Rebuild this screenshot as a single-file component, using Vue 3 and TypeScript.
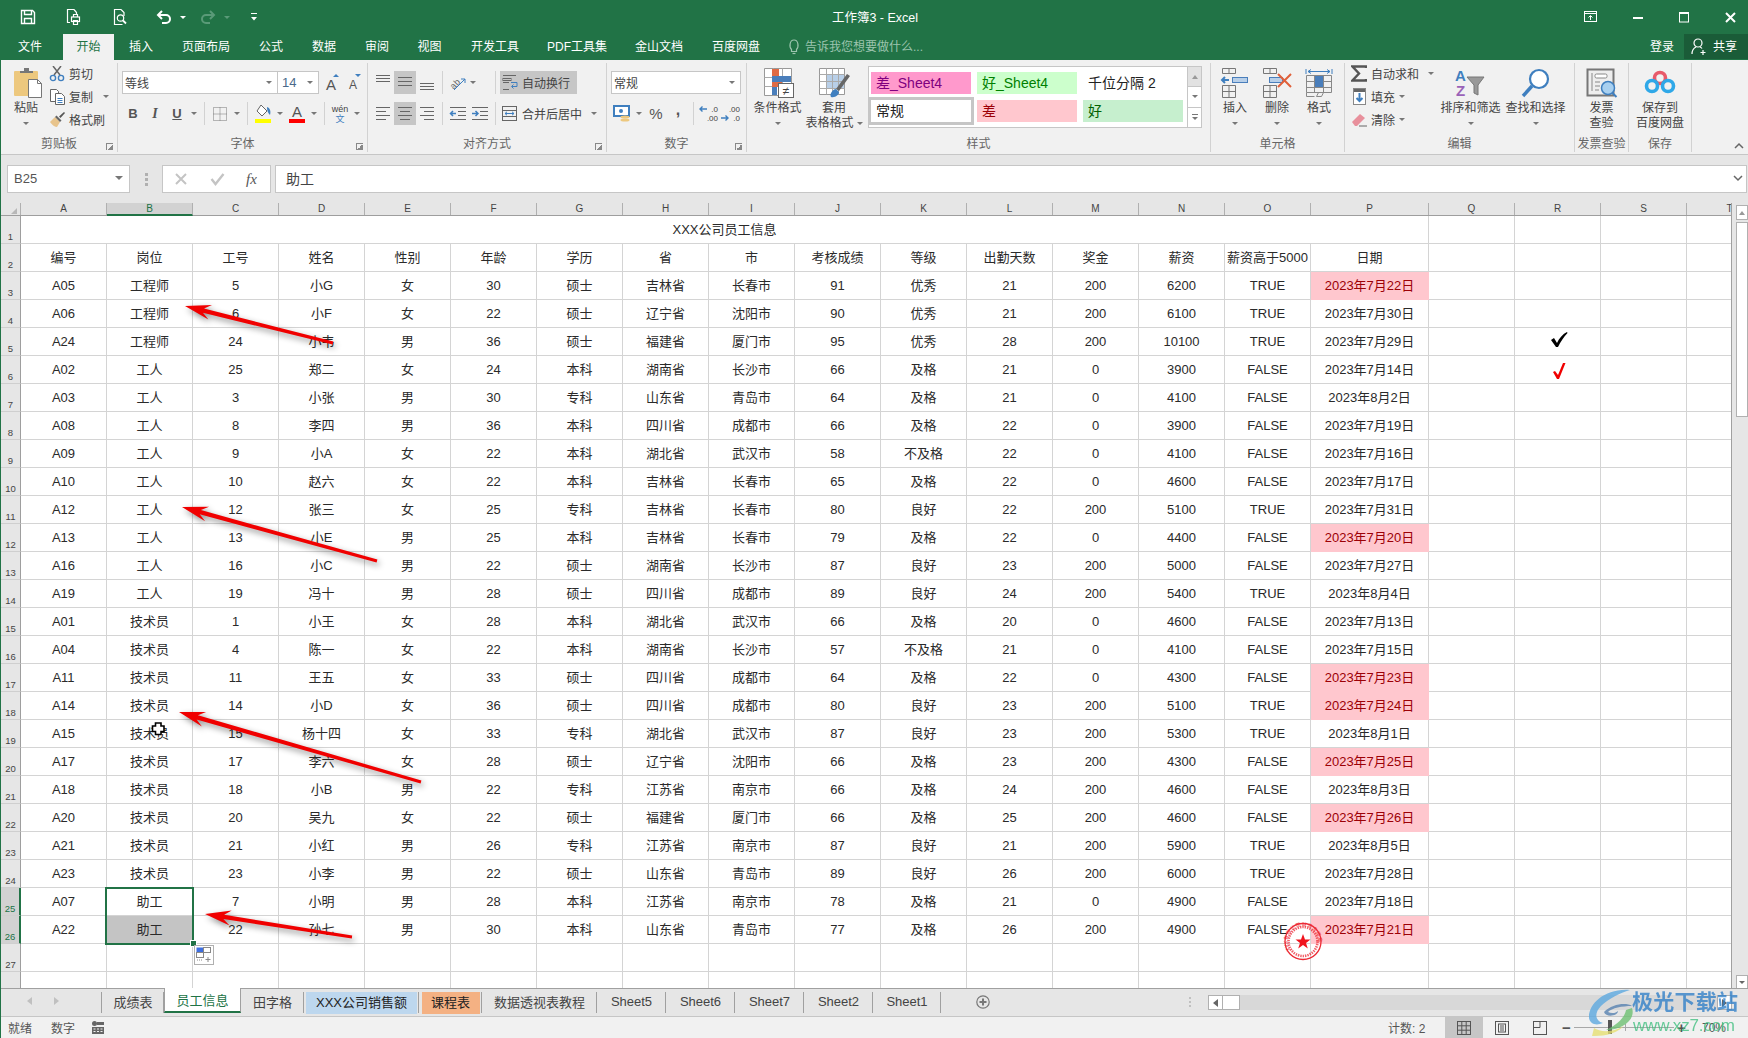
<script setup lang="ts">
interface Cell { text: string, width: number, kind?: string }

const mainTabs = [
  { name: '文件', width: 63 },
  { name: '开始', width: 51, active: true },
  { name: '插入', width: 54 },
  { name: '页面布局', width: 76 },
  { name: '公式', width: 54 },
  { name: '数据', width: 52 },
  { name: '审阅', width: 54 },
  { name: '视图', width: 51 },
  { name: '开发工具', width: 80 },
  { name: 'PDF工具集', width: 84 },
  { name: '金山文档', width: 80 },
  { name: '百度网盘', width: 74 },
]

const sheetTabs = [
  { name: '成绩表', width: 62 },
  { name: '员工信息', width: 77, kind: 'active' },
  { name: '田字格', width: 63 },
  { name: 'XXX公司销售额', width: 115, kind: 'blue' },
  { name: '课程表', width: 63, kind: 'orange' },
  { name: '数据透视表教程', width: 115 },
  { name: 'Sheet5', width: 69 },
  { name: 'Sheet6', width: 69 },
  { name: 'Sheet7', width: 69 },
  { name: 'Sheet2', width: 69 },
  { name: 'Sheet1', width: 68 },
]

const letters = 'ABCDEFGHIJKLMNOPQRST'.split('')
const colWidth = (i: number) => (i === 15 ? 118 : 86)

const data = [
  '编号 岗位 工号 姓名 性别 年龄 学历 省 市 考核成绩 等级 出勤天数 奖金 薪资 薪资高于5000 日期',
  'A05 工程师 5 小G 女 30 硕士 吉林省 长春市 91 优秀 21 200 6200 TRUE 2023年7月22日',
  'A06 工程师 6 小F 女 22 硕士 辽宁省 沈阳市 90 优秀 21 200 6100 TRUE 2023年7月30日',
  'A24 工程师 24 小韦 男 36 硕士 福建省 厦门市 95 优秀 28 200 10100 TRUE 2023年7月29日',
  'A02 工人 25 郑二 女 24 本科 湖南省 长沙市 66 及格 21 0 3900 FALSE 2023年7月14日',
  'A03 工人 3 小张 男 30 专科 山东省 青岛市 64 及格 21 0 4100 FALSE 2023年8月2日',
  'A08 工人 8 李四 男 36 本科 四川省 成都市 66 及格 22 0 3900 FALSE 2023年7月19日',
  'A09 工人 9 小A 女 22 本科 湖北省 武汉市 58 不及格 22 0 4100 FALSE 2023年7月16日',
  'A10 工人 10 赵六 女 22 本科 吉林省 长春市 65 及格 22 0 4600 FALSE 2023年7月17日',
  'A12 工人 12 张三 女 25 专科 吉林省 长春市 80 良好 22 200 5100 TRUE 2023年7月31日',
  'A13 工人 13 小E 男 25 本科 吉林省 长春市 79 及格 22 0 4400 FALSE 2023年7月20日',
  'A16 工人 16 小C 男 22 硕士 湖南省 长沙市 87 良好 23 200 5000 FALSE 2023年7月27日',
  'A19 工人 19 冯十 男 28 硕士 四川省 成都市 89 良好 24 200 5400 TRUE 2023年8月4日',
  'A01 技术员 1 小王 女 28 本科 湖北省 武汉市 66 及格 20 0 4600 FALSE 2023年7月13日',
  'A04 技术员 4 陈一 女 22 本科 湖南省 长沙市 57 不及格 21 0 4100 FALSE 2023年7月15日',
  'A11 技术员 11 王五 女 33 硕士 四川省 成都市 64 及格 22 0 4300 FALSE 2023年7月23日',
  'A14 技术员 14 小D 女 36 硕士 四川省 成都市 80 良好 23 200 5100 TRUE 2023年7月24日',
  'A15 技术员 15 杨十四 女 33 专科 湖北省 武汉市 87 良好 23 200 5300 TRUE 2023年8月1日',
  'A17 技术员 17 李六 女 28 硕士 辽宁省 沈阳市 66 及格 23 200 4300 FALSE 2023年7月25日',
  'A18 技术员 18 小B 男 22 专科 江苏省 南京市 66 及格 24 200 4600 FALSE 2023年8月3日',
  'A20 技术员 20 吴九 女 22 硕士 福建省 厦门市 66 及格 25 200 4600 FALSE 2023年7月26日',
  'A21 技术员 21 小红 男 26 专科 江苏省 南京市 87 良好 21 200 5900 TRUE 2023年8月5日',
  'A23 技术员 23 小李 男 22 硕士 山东省 青岛市 89 良好 26 200 6000 TRUE 2023年7月28日',
  'A07 助工 7 小明 男 28 本科 江苏省 南京市 78 及格 21 0 4900 FALSE 2023年7月18日',
  'A22 助工 22 孙七 男 30 本科 山东省 青岛市 77 及格 26 200 4900 FALSE 2023年7月21日',
]

// dates caught by the conditional rule in the sheet
const pink = new Set(['22', '20', '23', '24', '25', '26', '21'])

function blanks(from: number): Cell[] {
  return letters.slice(from).map((_, i) => ({ text: '', width: colWidth(i + from) }))
}

const rows: Cell[][] = [
  [{ text: 'XXX公司员工信息', width: 1408 }, ...blanks(16)],
  ...data.map((line, r) => [
    ...line.split(' ').map((text, i) => {
      const m = text.match(/^2023年7月(\d+)日$/)
      let kind = ''
      if (m && pink.has(m[1])) kind = 'bad'
      if (r === 24 && i === 1) kind = 'fill'
      return { text, width: colWidth(i), kind }
    }),
    ...blanks(16),
  ]),
  blanks(0),
  blanks(0),
]

function arrowPoints(tail: number[], tip: number[]) {
  const dx = tip[0] - tail[0]
  const dy = tip[1] - tail[1]
  const len = Math.hypot(dx, dy)
  const ux = dx / len
  const uy = dy / len
  const at = (back: number, side: number) =>
    `${(tip[0] - ux * back - uy * side).toFixed(1)},${(tip[1] - uy * back + ux * side).toFixed(1)}`
  return [
    at(0, 0), at(26, 7.5), at(19, 2.2), at(len, 1.6),
    at(len, -1.6), at(19, -2.2), at(26, -7.5),
  ].join(' ')
}

const arrows = [
  arrowPoints([333, 343], [185, 306]),
  arrowPoints([377, 561], [182, 507]),
  arrowPoints([421, 782], [179, 712]),
  arrowPoints([352, 937], [205, 914]),
]
</script>

<template>
  <div class="app">
    <header class="titlebar">
      <div class="qat">
        <svg width="16" height="16" viewBox="0 0 16 16" fill="none" stroke="#fff" stroke-width="1.4"><path d="M1.5 1.5h11l2 2v11h-13z" /><path d="M4.5 1.5v4h7v-4M4.5 14.5v-5h7v5" /></svg>
        <svg width="16" height="18" viewBox="0 0 16 18" fill="none" stroke="#fff" stroke-width="1.2"><path d="M9 1.5H2.500v13H5M9 1.500l2.500 3V7" /><rect x="6.500" y="9" width="8" height="4.500" /><path d="M8.500 9V6.500h4V9M8.500 12.500h4v4h-4z" /></svg>
        <svg width="16" height="18" viewBox="0 0 16 18" fill="none" stroke="#fff" stroke-width="1.200"><path d="M9 1.500H2.500v15h8M9 1.500l3 3V8" /><circle cx="8.500" cy="10" r="3.200" /><path d="M11 12.500l3 3" stroke-width="1.800" /></svg>
        <svg width="16" height="16" viewBox="0 0 16 16" fill="none" stroke="#fff" stroke-width="2"><path d="M2 6h8a4 4 0 0 1 0 8H6" /><path d="M6 2L2 6l4 4" /></svg>
        <i class="caret white" />
        <svg class="redo" width="16" height="16" viewBox="0 0 16 16" fill="none" stroke="#5a9a78" stroke-width="2"><path d="M14 6H6a4 4 0 0 0 0 8h4" /><path d="M10 2l4 4-4 4" /></svg>
        <i class="caret dim" />
        <svg class="custom" width="8" height="8" viewBox="0 0 8 8" fill="#fff"><rect x="1" y="0" width="6" height="1" /><path d="M1 4h6L4 7.500z" /></svg>
      </div>
      <div class="doc-title">工作簿3 - Excel</div>
      <div class="win">
        <svg width="14" height="12" viewBox="0 0 14 12" fill="none" stroke="#fff"><rect x=".5" y=".5" width="12" height="10" /><path d="M.5 2.500h12M6.500 9V5M4.500 6.500l2-2 2 2" /></svg>
        <svg width="10" height="10" viewBox="0 0 10 10" fill="#fff"><rect x="0" y="5" width="10" height="2" /></svg>
        <svg width="11" height="11" viewBox="0 0 11 11" fill="none" stroke="#fff"><rect x=".5" y=".5" width="9" height="9.500" /><path d="M.5 1.500h9" /></svg>
        <svg width="11" height="11" viewBox="0 0 11 11" fill="none" stroke="#fff" stroke-width="2"><path d="M1 1l9 9M10 1l-9 9" /></svg>
      </div>
    </header>

    <nav class="tabs">
      <div
        v-for="t in mainTabs"
        :key="t.name"
        class="tab"
        :class="{ active: t.active }"
        :style="{ width: t.width + 'px' }"
      >
        {{ t.name }}
      </div>
      <div class="tell">
        <svg width="12" height="16" viewBox="0 0 12 16" fill="none" stroke="#9cc4ae" stroke-width="1.200"><path d="M3.500 10.500C1 8 1.500 1 6 1s5 7 2.500 9.500v2h-5z" /><path d="M4.500 14.500h3" /></svg>
        <span>告诉我您想要做什么...</span>
      </div>
      <div class="login">登录</div>
      <div class="share">
        <svg width="16" height="18" viewBox="0 0 16 18" fill="none" stroke="#fff" stroke-width="1.200"><circle cx="7" cy="5" r="4" /><path d="M1 16c0-4 2-6 4-7M9 9c1 .4 1.500 .8 2 1.500M12 12v5M9.500 14.500h5" /></svg>
        <span>共享</span>
      </div>
    </nav>

    <section class="ribbon">
      <!-- 剪贴板 -->
      <div class="group g-clip">
        <div class="body">
          <div class="big paste">
            <svg width="32" height="30" viewBox="0 0 32 30">
              <rect x="4" y="3" width="24" height="25" rx="1" fill="#edc87e" />
              <path d="M10 5V3h4V0h5v3h4v2z" fill="#777" />
              <path d="M18.500 11.500h9l4 4v14h-13z" fill="#fff" stroke="#777" />
              <path d="M27.500 11.500v4h4" fill="none" stroke="#777" />
            </svg>
            <div class="lbl">粘贴</div>
            <div class="lbl"><i class="caret" /></div>
          </div>
          <div class="smalls">
            <div class="small">
              <svg width="16" height="16" viewBox="0 0 16 16" fill="none"><path d="M5 9l7-9M11 9L4 0" stroke="#666" stroke-width="1.500" /><circle cx="4" cy="12" r="2.600" stroke="#3f7fbf" stroke-width="1.400" /><circle cx="12" cy="12" r="2.600" stroke="#3f7fbf" stroke-width="1.400" /></svg>
              <span>剪切</span>
            </div>
            <div class="small">
              <svg width="16" height="16" viewBox="0 0 16 16" fill="#fff" stroke="#666"><path d="M1.500 .5h6l2 2v10h-8z" /><path d="M6.500 4.500h6l3 3v8h-9z" /><path d="M8.500 9.500h5M8.500 11.500h5M8.500 13.500h5" stroke="#3f7fbf" fill="none" /></svg>
              <span>复制</span>
              <i class="caret copy-caret" />
            </div>
            <div class="small">
              <svg width="16" height="16" viewBox="0 0 16 16"><path d="M1 10l5-5 5 5-3 5c-2 0-5-2-7-5z" fill="#e8c48c" /><path d="M6 5l5 5 1.500-1.500-5-5z" fill="#666" /><path d="M10 4.500L15 0l1 1-4.500 5z" fill="#555" /></svg>
              <span>格式刷</span>
            </div>
          </div>
        </div>
        <div class="label">剪贴板<i class="launcher" /></div>
      </div>

      <!-- 字体 -->
      <div class="group g-font">
        <div class="body rows">
          <div class="line">
            <div class="select font-name"><span>等线</span><i class="caret" /></div>
            <div class="select font-size"><span>14</span><i class="caret" /></div>
            <div class="tb grow"><b class="a-big">A</b><i class="tri up" /></div>
            <div class="tb grow"><b class="a-small">A</b><i class="tri down" /></div>
          </div>
          <div class="line">
            <div class="tb glyph"><b>B</b></div>
            <div class="tb glyph"><b><em>I</em></b></div>
            <div class="tb glyph"><b class="under">U</b></div>
            <div class="dd"><i class="caret" /></div>
            <i class="vsep" />
            <div class="tb">
              <svg width="16" height="16" viewBox="0 0 16 16" fill="none" stroke="#777" stroke-dasharray="1 1"><rect x="1.500" y="1.500" width="13" height="13" /><path d="M8 1.500v13M1.500 8h13" /></svg>
            </div>
            <div class="dd"><i class="caret" /></div>
            <i class="vsep" />
            <div class="tb">
              <svg width="18" height="20" viewBox="0 0 18 20"><path d="M7 1l6 6-5 5-5-5z" fill="#fff" stroke="#666" /><path d="M13 3c3 1 4 4 3 8-2-2-3-4-3-8z" fill="#3f7fbf" /><rect x="1" y="15" width="16" height="4" fill="#ffff00" /></svg>
            </div>
            <div class="dd"><i class="caret" /></div>
            <div class="tb color-a"><b>A</b><i class="bar" /></div>
            <div class="dd"><i class="caret" /></div>
            <i class="vsep" />
            <div class="tb wen"><span>wén</span><span class="wen-zh">文</span></div>
            <div class="dd"><i class="caret" /></div>
          </div>
        </div>
        <div class="label">字体<i class="launcher" /></div>
      </div>

      <!-- 对齐方式 -->
      <div class="group g-align">
        <div class="body rows">
          <div class="line">
            <div class="tb"><svg width="22" height="23" class="lines"><path d="M4 4.500h14M4 7.500h14M4 10.500h14" /></svg></div>
            <div class="tb on"><svg width="22" height="23" class="lines"><path d="M4 6.500h14M4 10.500h14M4 14.500h14" /></svg></div>
            <div class="tb"><svg width="22" height="23" class="lines"><path d="M4 12.500h14M4 15.500h14M4 18.500h14" /></svg></div>
            <i class="vsep" />
            <div class="tb orient">
              <svg width="18" height="18" viewBox="0 0 18 18" fill="none" stroke="#666"><text x="1" y="13" font-size="9" fill="#666" stroke="none" font-family="Liberation Sans" transform="rotate(-45 6 10)">ab</text><path d="M5 16L16 5M16 5h-4M16 5v4" stroke="#3f7fbf" /></svg>
            </div>
            <div class="dd narrow"><i class="caret" /></div>
            <i class="vsep wide" />
            <div class="wrap on">
              <svg width="17" height="17" viewBox="0 0 17 17" fill="none" stroke="#666"><path d="M1 1.500h13M1 8.500h6M1 15.500h6" /><rect x="1" y="4.500" width="8" height="2" /><path d="M9 8.500h6v4h-5M11.500 10.500l-2 2 2 2" stroke="#3f7fbf" /></svg>
              <span>自动换行</span>
            </div>
          </div>
          <div class="line">
            <div class="tb"><svg width="22" height="23" class="lines"><path d="M4 5.500h14M4 9.500h10M4 13.500h14M4 17.500h10" /></svg></div>
            <div class="tb on"><svg width="22" height="23" class="lines"><path d="M4 5.500h14M6 9.500h10M4 13.500h14M6 17.500h10" /></svg></div>
            <div class="tb"><svg width="22" height="23" class="lines"><path d="M4 5.500h14M8 9.500h10M4 13.500h14M8 17.500h10" /></svg></div>
            <i class="vsep" />
            <div class="tb"><svg width="18" height="16" viewBox="0 0 18 16" fill="none" stroke="#666"><path d="M1 1.500h16M9 5.500h8M9 9.500h8M1 13.500h16" /><path d="M7 7.500H1.500M4 5L1.500 7.500 4 10" stroke="#3f7fbf" stroke-width="1.500" /></svg></div>
            <div class="tb"><svg width="18" height="16" viewBox="0 0 18 16" fill="none" stroke="#666"><path d="M1 1.500h16M9 5.500h8M9 9.500h8M1 13.500h16" /><path d="M1 7.500h6M4.500 5L7 7.500 4.500 10" stroke="#3f7fbf" stroke-width="1.500" /></svg></div>
            <i class="vsep" />
            <div class="wrap merge">
              <svg width="16" height="17" viewBox="0 0 16 17" fill="none" stroke="#666"><rect x=".5" y="1.500" width="14" height="14" /><path d="M.5 5.500h14M.5 11.500h14" /><path d="M3 8.500h9M5 6.800L3 8.500l2 1.700M10 6.800l2 1.700-2 1.700" stroke="#3f7fbf" /></svg>
              <span>合并后居中</span>
              <i class="caret merge-caret" />
            </div>
          </div>
        </div>
        <div class="label">对齐方式<i class="launcher" /></div>
      </div>

      <!-- 数字 -->
      <div class="group g-num">
        <div class="body rows">
          <div class="line">
            <div class="select num-format"><span>常规</span><i class="caret" /></div>
          </div>
          <div class="line">
            <div class="tb">
              <svg width="18" height="18" viewBox="0 0 18 18"><rect x="1" y="1" width="15" height="10" fill="#fff" stroke="#3f7fbf" stroke-width="2" /><circle cx="8" cy="6" r="2" fill="#3f7fbf" /><ellipse cx="12" cy="12" rx="4.500" ry="1.500" fill="#edc87e" /><ellipse cx="12" cy="15" rx="4.500" ry="1.500" fill="#edc87e" /></svg>
            </div>
            <div class="dd thin"><i class="caret" /></div>
            <div class="tb pct">%</div>
            <div class="tb comma">,</div>
            <i class="vsep" />
            <div class="tb dec"><span>.0</span><span>.00</span><svg width="8" height="6" class="dec-a" viewBox="0 0 8 6" fill="none" stroke="#3f7fbf" stroke-width="1.400"><path d="M8 3H1M3.500 .5L1 3l2.500 2.500" /></svg></div>
            <div class="tb dec"><span>.00</span><span>.0</span><svg width="8" height="6" class="dec-b" viewBox="0 0 8 6" fill="none" stroke="#3f7fbf" stroke-width="1.400"><path d="M0 3h7M4.500 .5L7 3 4.500 5.500" /></svg></div>
          </div>
        </div>
        <div class="label">数字<i class="launcher" /></div>
      </div>

      <!-- 样式 -->
      <div class="group g-style">
        <div class="body">
          <div class="big cond">
            <svg width="32" height="30" viewBox="0 0 32 30">
              <path d="M2.500 .5h27v27h-27z" fill="#fff" stroke="#999" />
              <path d="M2.500 9.500h27M2.500 18.500h27M11.500 .5v27M20.500 .5v27" stroke="#aaa" fill="none" />
              <rect x="10" y="1" width="7" height="8" fill="#e06b45" />
              <rect x="10" y="8" width="19" height="6" fill="#4a7ebb" />
              <rect x="10" y="14" width="10" height="5" fill="#e06b45" />
              <rect x="10" y="19" width="5" height="8" fill="#4a7ebb" />
              <rect x="16.500" y="15.500" width="15" height="14" fill="#fff" stroke="#666" />
              <text x="24" y="26.500" text-anchor="middle" font-size="12" fill="#444" font-family="Liberation Sans">≠</text>
            </svg>
            <div class="lbl">条件格式</div>
            <div class="lbl"><i class="caret" /></div>
          </div>
          <div class="big table-fmt">
            <svg width="32" height="30" viewBox="0 0 32 30">
              <path d="M1.500 .5h25v26h-25z" fill="#fff" stroke="#999" />
              <rect x="8" y="6" width="18" height="14" fill="#b8cfe8" />
              <path d="M1.500 6.500h25M1.500 13.500h25M1.500 20.500h25M8.500 .5v26M14.500 .5v26M20.500 .5v26" stroke="#aaa" fill="none" />
              <path d="M18 21l11-15 3 2-11 15z" fill="#666" />
              <path d="M13 29c-2-3 2-8 5-8l3 3c0 3-4 6-8 5z" fill="#3f7fbf" />
            </svg>
            <div class="lbl">套用</div>
            <div class="lbl">表格格式<i class="caret inline" /></div>
          </div>
          <div class="gallery">
            <div class="st st-pink">差_Sheet4</div>
            <div class="st st-lime">好_Sheet4</div>
            <div class="st">千位分隔 2</div>
            <div class="st st-normal">常规</div>
            <div class="st st-bad">差</div>
            <div class="st st-good">好</div>
          </div>
          <div class="gallery-scroll">
            <div class="gs top"><i class="caret up-caret" /></div>
            <div class="gs"><i class="caret" /></div>
            <div class="gs more"><i class="dash" /><i class="caret" /></div>
          </div>
        </div>
        <div class="label">样式</div>
      </div>

      <!-- 单元格 -->
      <div class="group g-cells">
        <div class="body">
          <div class="big cell-tool">
            <svg width="32" height="30" viewBox="0 0 32 30" fill="none" stroke="#777">
              <path d="M3.500 .5h13v5h-13zM10 .5v5M3.500 17.500h13v12h-13zM10 17.500v12M3.500 23.500h13" />
              <rect x="13.500" y="9.500" width="15" height="5" fill="#b8cfe8" stroke="#4a7ebb" />
              <path d="M10 12H3M6 9l-3 3 3 3" stroke="#3f7fbf" stroke-width="2" />
            </svg>
            <div class="lbl">插入</div>
            <div class="lbl"><i class="caret" /></div>
          </div>
          <div class="big cell-tool">
            <svg width="32" height="30" viewBox="0 0 32 30" fill="none" stroke="#777">
              <path d="M2.500 .5h13v5h-13zM9 .5v5M2.500 17.500h13v12h-13zM9 17.500v12M2.500 23.500h13" />
              <rect x="8.500" y="9.500" width="13" height="5" fill="#b8cfe8" stroke="#4a7ebb" />
              <path d="M17 6l13 13M30 6L17 19" stroke="#e0603a" stroke-width="2" />
            </svg>
            <div class="lbl">删除</div>
            <div class="lbl"><i class="caret" /></div>
          </div>
          <div class="big cell-tool">
            <svg width="32" height="30" viewBox="0 0 32 30" fill="none" stroke="#888">
              <path d="M3 1v5M29 1v5M5 3.500h22M8 1.500L5 3.500l3 2M24 1.500l3 2-3 2" stroke="#3f7fbf" />
              <path d="M3.500 7.500h25v17h-25zM3.500 13.500h25M3.500 19.500h25M11.500 7.500v17M20.500 7.500v17" />
              <rect x="12" y="8" width="8" height="11" fill="#4a7ebb" stroke="none" />
              <path d="M3.500 24.500v4h8M20.500 24.500l-2 4h-5l2-4" />
            </svg>
            <div class="lbl">格式</div>
            <div class="lbl"><i class="caret" /></div>
          </div>
        </div>
        <div class="label">单元格</div>
      </div>

      <!-- 编辑 -->
      <div class="group g-edit">
        <div class="body">
          <div class="smalls edit-smalls">
            <div class="small">
              <svg width="16" height="17" viewBox="0 0 16 17" fill="none" stroke="#555" stroke-width="2.400"><path d="M15 3V1.500H1.500L8 8.500l-6.500 7H15V14" /></svg>
              <span>自动求和</span>
              <i class="caret sum-caret" />
            </div>
            <div class="small">
              <svg width="16" height="17" viewBox="0 0 16 17" fill="#fff" stroke="#888"><rect x="2.500" y=".5" width="12" height="16" /><rect x="3" y="1" width="11" height="3" fill="#666" stroke="none" /><path d="M8.500 5v8M5.500 10l3 3 3-3" fill="none" stroke="#3f7fbf" stroke-width="2" /></svg>
              <span>填充</span>
              <i class="caret tail-caret" />
            </div>
            <div class="small">
              <svg width="16" height="16" viewBox="0 0 16 16"><path d="M1 10l8-8 5 4-8 8H4z" fill="#e8909c" /><path d="M8 14h8" stroke="#666" /></svg>
              <span>清除</span>
              <i class="caret tail-caret" />
            </div>
          </div>
          <div class="big sort">
            <svg width="32" height="30" viewBox="0 0 32 30">
              <text x="0" y="13" font-size="15" font-weight="700" fill="#3f7fbf" font-family="Liberation Sans">A</text>
              <text x="1" y="28" font-size="15" font-weight="700" fill="#9a62b8" font-family="Liberation Sans">Z</text>
              <path d="M12 9h17l-6 8v10l-4-2v-8z" fill="#999" stroke="#777" />
            </svg>
            <div class="lbl">排序和筛选</div>
            <div class="lbl"><i class="caret" /></div>
          </div>
          <div class="big sort">
            <svg width="32" height="30" viewBox="0 0 32 30" fill="none" stroke="#3f7fbf">
              <circle cx="19" cy="11" r="9" stroke-width="2.200" fill="#fff" />
              <path d="M12 18L3 28" stroke-width="3.400" />
            </svg>
            <div class="lbl">查找和选择</div>
            <div class="lbl"><i class="caret" /></div>
          </div>
        </div>
        <div class="label">编辑</div>
      </div>

      <!-- 发票查验 -->
      <div class="group g-inv">
        <div class="body">
          <div class="big wide-tool">
            <svg width="32" height="30" viewBox="0 0 32 30">
              <rect x="1.500" y="1.500" width="26" height="26" fill="#eee" stroke="#777" stroke-width="2" />
              <rect x="9" y="6" width="12" height="4" rx="1.500" fill="#fff" stroke="#888" />
              <path d="M6 5v18M9 14h5M9 18h5M9 22h4" stroke="#888" />
              <circle cx="22" cy="20" r="6.500" fill="#a8d0f0" stroke="#3f7fbf" stroke-width="1.500" />
              <path d="M26.500 25l4 4" stroke="#3f7fbf" stroke-width="2" />
            </svg>
            <div class="lbl">发票</div>
            <div class="lbl">查验</div>
          </div>
        </div>
        <div class="label">发票查验</div>
      </div>

      <!-- 保存 -->
      <div class="group g-save">
        <div class="body">
          <div class="big wide-tool">
            <svg width="32" height="30" viewBox="0 0 32 30" fill="none" stroke-width="3.600">
              <circle cx="16" cy="10" r="5.500" stroke="#e85a6a" />
              <circle cx="8" cy="18" r="5.500" stroke="#2fa8e8" />
              <circle cx="24" cy="18" r="5.500" stroke="#2fa8e8" />
            </svg>
            <div class="lbl">保存到</div>
            <div class="lbl">百度网盘</div>
          </div>
        </div>
        <div class="label">保存</div>
      </div>

      <svg class="collapse" width="10" height="7" viewBox="0 0 10 7" fill="none" stroke="#666" stroke-width="1.500"><path d="M1 6l4-4 4 4" /></svg>
    </section>

    <section class="formula">
      <div class="name-box"><span>B25</span><i class="caret big-caret" /></div>
      <div class="dots"><i /><i /><i /></div>
      <div class="fx-box">
        <svg width="14" height="14" viewBox="0 0 14 14" fill="none" stroke="#c4c4c4" stroke-width="2"><path d="M2 2l10 10M12 2L2 12" /></svg>
        <svg width="15" height="14" viewBox="0 0 15 14" fill="none" stroke="#c4c4c4" stroke-width="2.400"><path d="M1.500 7l4 5 8-10" /></svg>
        <span class="fx">fx</span>
      </div>
      <div class="input">
        <span>助工</span>
        <svg width="10" height="7" viewBox="0 0 10 7" fill="none" stroke="#666" stroke-width="1.500"><path d="M1 1l4 4 4-4" /></svg>
      </div>
    </section>

    <section class="sheet">
      <div class="grid">
        <div class="col-head">
          <div class="corner"><i /></div>
          <div
            v-for="(c, i) in letters"
            :key="c"
            class="ch"
            :class="{ on: c === 'B' }"
            :style="{ width: colWidth(i) + 'px' }"
          >
            {{ c }}
          </div>
        </div>
        <div class="rows-wrap">
          <div v-for="(row, r) in rows" :key="r" class="row">
            <div class="rh" :class="{ on: r === 24 || r === 25 }">{{ r < 27 ? r + 1 : '' }}</div>
            <div
              v-for="(cell, c) in row"
              :key="c"
              class="cell"
              :class="cell.kind"
              :style="{ width: cell.width + 'px' }"
            >
              {{ cell.text }}
            </div>
          </div>
        </div>
        <div class="selection" />
        <div class="handle" />
        <div class="quick">
          <svg width="16" height="16" viewBox="0 0 16 16" fill="none" stroke="#888"><rect x="1" y="1" width="6" height="4.500" fill="#3f6fe0" stroke="#3f6fe0" /><rect x="7.500" y=".5" width="7" height="5" /><rect x=".5" y="5.500" width="7" height="5" /><path d="M1 13h6" stroke-dasharray="1 1" /><path d="M12 10v5M9.500 12.500h5" /></svg>
        </div>
      </div>
      <div class="vscroll">
        <div class="sb-btn"><i class="caret up-caret" /></div>
        <div class="sb-thumb" />
        <div class="sb-btn end"><i class="caret" /></div>
      </div>
    </section>

    <section class="sheet-tabs">
      <div class="nav-arrows">
        <i class="tri-l" />
        <i class="tri-r" />
      </div>
      <i class="tab-sep" />
      <div
        v-for="t in sheetTabs"
        :key="t.name"
        class="stab"
        :class="t.kind"
        :style="{ width: t.width + 'px' }"
      >
        <span>{{ t.name }}</span>
      </div>
      <svg class="add" width="14" height="14" viewBox="0 0 14 14" fill="none" stroke="#777"><circle cx="7" cy="7" r="6.200" stroke-width="1.200" /><path d="M7 3.500v7M3.500 7h7" stroke-width="2" /></svg>
      <div class="dots tab-dots"><i /><i /><i /></div>
      <div class="hscroll">
        <div class="hb"><i class="tri-l dark" /></div>
        <div class="hthumb" />
        <div class="htrack" />
        <div class="hb"><i class="tri-r dark" /></div>
      </div>
    </section>

    <footer class="status">
      <span class="ready">就绪</span>
      <span class="numlock">数字</span>
      <svg class="macro" width="12" height="13" viewBox="0 0 12 13" fill="#666"><circle cx="2.500" cy="2.500" r="2.500" /><rect x="5" y="1" width="7" height="3" /><path d="M0 6h12v7H0zM1.500 7.500v1h2v-1zM5 7.500v1h2v-1zM8.500 7.500v1h2v-1zM1.500 10v1h2v-1zM5 10v1h2v-1zM8.500 10v1h2v-1z" fill-rule="evenodd" /></svg>
      <div class="status-right">
        <span class="count">计数: 2</span>
        <div class="view on">
          <svg width="14" height="14" viewBox="0 0 14 14" fill="none" stroke="#555"><rect x=".5" y=".5" width="13" height="13" /><path d="M.5 4.800h13M.5 9.200h13M4.800 .5v13M9.200 .5v13" /></svg>
        </div>
        <div class="view">
          <svg width="14" height="14" viewBox="0 0 14 14" fill="none" stroke="#555"><rect x=".5" y=".5" width="13" height="13" /><rect x="3.500" y="3" width="7" height="8" /><path d="M5 5h4M5 7h4M5 9h4" /></svg>
        </div>
        <div class="view">
          <svg width="14" height="14" viewBox="0 0 14 14" fill="none" stroke="#555"><rect x=".5" y=".5" width="13" height="13" /><path d="M7 .5v6H.5" /></svg>
        </div>
        <span class="pm">−</span>
        <div class="slider"><i class="tick" /><i class="knob" /></div>
        <span class="pm">+</span>
        <span class="zoom">70%</span>
      </div>
    </footer>

    <!-- things floating over the sheet: pasted arrows, shapes, stamp, watermark -->
    <svg class="overlay" width="1748" height="1038" viewBox="0 0 1748 1038">
      <polygon v-for="(pts, i) in arrows" :key="i" class="arrow" :points="pts" />
      <path d="M155.500 723h5.500v3h3v5.500h-3v3h-5.500v-3h-3v-5.500h3z" fill="#fff" stroke="#000" stroke-width="1.600" />
      <path d="M1551 340l3-2 3 5c2-5 6-9 10-11l.5 1c-4 4-7 9-9.500 14h-2z" fill="#000" />
      <path d="M1553 372l2-1 3 4 5-12h2.500l-6.500 16h-2z" fill="#f00000" />
      <g class="stamp">
        <circle cx="1303" cy="941.500" r="18" fill="none" stroke="#ec2a34" stroke-width="1.300" />
        <circle cx="1303" cy="941.500" r="14.500" fill="none" stroke="#ec2a34" stroke-width="2.600" stroke-dasharray="1.400 1" stroke-opacity=".75" />
        <path id="stamp-ring" d="M1290 950a15.500 15.500 0 1 1 26 0" fill="none" />
        <text font-size="4.800" fill="#ec2a34" letter-spacing=".6" font-family="Noto Sans CJK SC, sans-serif"><textPath href="#stamp-ring">XXX有限公司财务专用章</textPath></text>
        <polygon points="1303,934 1305,939.500 1310.500,939.500 1306,943 1307.800,948.500 1303,945 1298.200,948.500 1300,943 1295.500,939.500 1301,939.500" fill="#f0141e" />
      </g>
      <g class="mark">
        <path d="M1630 990c-25-2-42 14-41 28 1 6 7 8 14 5-8-2-9-10-2-17 7-7 19-13 29-16z" fill="#5aa8e0" />
        <path d="M1604 1012c8-8 22-10 28-6-10 0-20 2-24 6 4 2 8 1 10-1 0 5-12 7-14 1z" fill="#5580b0" />
        <path d="M1632 1008c4 12-10 22-26 22 8-4 18-10 20-20z" fill="#6cc070" />
        <path d="M1594 1028c6 4 18 5 30-2-10 10-24 10-32 10z" fill="#e6e070" />
        <text x="1632" y="1009" font-size="21" font-weight="700" fill="#2f7fc8" textLength="106" font-family="Noto Sans CJK SC, sans-serif">极光下载站</text>
        <text x="1633" y="1031" font-size="17" fill="#3fbf7f" textLength="102" font-family="Liberation Sans, sans-serif">www.xz7.com</text>
      </g>
    </svg>
  </div>
</template>

<style scoped>
.app {
  position: relative;
  width: 1748px;
  height: 1038px;
  box-sizing: border-box;
  border-left: 1px solid #217346;
  overflow: hidden;
  background: #f1f1f1;
  color: #444;
  font: 12px "Liberation Sans", "Noto Sans CJK SC", sans-serif;
}
i { display: block; font-style: normal; }

/* small drop-down triangle used everywhere */
.caret {
  flex: none;
  width: 0;
  height: 0;
  border-left: 3px solid transparent;
  border-right: 3px solid transparent;
  border-top: 3px solid #777;
}
.caret.white { border-top-color: #fff; margin-left: 8px; }
.caret.dim { border-top-color: #5a9a78; margin-left: 8px; }
.caret.up-caret { border-top: 0; border-bottom: 4px solid #999; }

/* title bar */
.titlebar {
  position: relative;
  height: 34px;
  margin-left: -1px;
  background: #217346;
  display: flex;
  align-items: center;
  color: #fff;
}
.qat { display: flex; align-items: center; padding-left: 20px; gap: 0; }
.qat svg:nth-child(1) { margin-right: 29px; }
.qat svg:nth-child(2) { margin-right: 31px; }
.qat svg:nth-child(3) { margin-right: 28px; }
.qat .redo { margin-left: 14px; }
.qat .custom { margin-left: 20px; }
.doc-title {
  position: absolute;
  left: 0;
  right: 0;
  top: 10px;
  padding-left: 2px;
  text-align: center;
  font-size: 12.500px;
  line-height: 16px;
}
.win { margin-left: auto; display: flex; align-items: center; padding-right: 12px; }
.win svg:nth-child(1) { margin-right: 35px; }
.win svg:nth-child(2) { margin-right: 36px; }
.win svg:nth-child(3) { margin-right: 35px; }

/* tab strip */
.tabs {
  height: 26px;
  margin-left: -1px;
  background: #217346;
  display: flex;
  color: #fff;
  line-height: 26px;
}
.tab { text-align: center; flex: none; }
.tab:first-child { padding-right: 3px; box-sizing: border-box; }
.tab.active { background: #f1f1f1; color: #217346; }
.tell { display: flex; align-items: center; margin-left: 15px; color: #9cc4ae; gap: 5px; }
.login { margin-left: auto; margin-right: 10px; }
.share {
  width: 64px;
  box-sizing: border-box;
  height: 25px;
  background: #1a5c38;
  display: flex;
  align-items: center;
  padding-left: 7px;
  gap: 6px;
}

/* ribbon */
.ribbon {
  height: 95px;
  box-sizing: border-box;
  padding-top: 3px;
  display: flex;
  border-bottom: 1px solid #c6c6c6;
  background: #f1f1f1;
  position: relative;
}
.group {
  flex: none;
  height: 89px;
  box-sizing: border-box;
  border-right: 1px solid #d2d2d2;
  display: flex;
  flex-direction: column;
}
.g-clip { width: 117px; }
.g-font { width: 250px; }
.g-align { width: 239px; }
.g-num { width: 140px; }
.g-style { width: 464px; }
.g-cells { width: 134px; }
.g-edit { width: 230px; }
.g-inv { width: 54px; }
.g-save { width: 63px; }
.body { height: 74px; display: flex; box-sizing: border-box; }
.label {
  position: relative;
  height: 15px;
  line-height: 15px;
  text-align: center;
  color: #666;
  white-space: nowrap;
}
.launcher {
  position: absolute;
  right: 4px;
  bottom: 2px;
  width: 6px;
  height: 6px;
  border-left: 1px solid #888;
  border-top: 1px solid #888;
  background: linear-gradient(135deg, transparent 50%, #888 50%);
}
.big {
  flex: none;
  box-sizing: border-box;
  padding-top: 5px;
  display: flex;
  flex-direction: column;
  align-items: center;
}
.big svg { flex: none; height: 30px; margin-bottom: 3px; }
.lbl { height: 15px; line-height: 15px; display: flex; align-items: center; justify-content: center; white-space: nowrap; }
.caret.inline { margin-left: 3px; }
.paste { width: 32px; margin-left: 9px; margin-right: 7px; }
.smalls { display: flex; flex-direction: column; margin-top: -1px; }
.small { height: 23px; display: flex; align-items: center; white-space: nowrap; }
.small svg { flex: none; }
.small span { margin-left: 4px; }
.copy-caret { margin-left: 10px; }
.cond { width: 55px; margin-left: 3px; }
.table-fmt { width: 58px; }
.cell-tool { width: 42px; }
.cell-tool:first-child { margin-left: 3px; }
.edit-smalls { width: 87px; margin-left: 6px; }
.sum-caret { margin-left: 9px; }
.tail-caret { margin-left: 4px; }
.sort { width: 65px; }
.wide-tool { width: 100%; }

.rows { flex-direction: column; padding: 8px 0 0 4px; gap: 8px; }
.line { display: flex; align-items: center; height: 23px; }
.tb {
  position: relative;
  flex: none;
  width: 22px;
  height: 23px;
  display: flex;
  align-items: center;
  justify-content: center;
}
.tb.on, .wrap.on { background: #c6c6c6; }
.dd { flex: none; width: 12px; height: 23px; display: flex; align-items: center; justify-content: center; }
.dd.narrow { width: 8px; }
.dd.thin { width: 11px; }
.vsep { flex: none; width: 1px; height: 23px; background: #d2d2d2; margin: 0 4px; }
.vsep.wide { margin-left: 18px; }
.select {
  flex: none;
  box-sizing: border-box;
  height: 23px;
  background: #fff;
  border: 1px solid #c6c6c6;
  display: flex;
  align-items: center;
  justify-content: space-between;
  padding: 0 5px 0 2px;
}
.font-name { width: 156px; }
.font-size { width: 41px; border-left: 0; padding-left: 4px; font-size: 13px; color: #4a6a8a; }
.num-format { width: 130px; }
.grow:nth-child(3) { margin-left: 1px; }
.a-big { font-size: 15px; font-weight: 400; color: #555; margin-top: 3px; }
.a-small { font-size: 12px; font-weight: 400; color: #555; margin-top: 5px; }
.tri { position: absolute; width: 0; height: 0; border-left: 3px solid transparent; border-right: 3px solid transparent; right: 3px; top: 3px; }
.tri.up { border-bottom: 3px solid #3f7fbf; }
.tri.down { border-top: 3px solid #3f7fbf; }
.glyph { font-size: 13px; color: #555; }
.glyph em { font-family: "Liberation Serif", serif; font-size: 14px; }
.under { text-decoration: underline; }
.color-a { flex-direction: column; font-size: 15px; color: #555; }
.color-a b { font-weight: 400; line-height: 15px; }
.color-a .bar { width: 16px; height: 4px; background: #ff0000; }
.wen { flex-direction: column; font-size: 9px; line-height: 10px; color: #444; }
.wen-zh { color: #3f7fbf; }
.lines { fill: none; stroke: #666; }
.wrap {
  flex: none;
  box-sizing: border-box;
  width: 77px;
  height: 23px;
  display: flex;
  align-items: center;
  padding-left: 2px;
  white-space: nowrap;
  gap: 3px;
}
.wrap svg { flex: none; }
.wrap.merge { width: 100px; gap: 4px; }
.merge-caret { margin-left: 5px; }
.pct { font-size: 15px; color: #555; margin-left: 1px; }
.comma { font-size: 16px; font-weight: 700; color: #555; align-items: flex-start; line-height: 16px; }
.dec { flex-direction: column; font-size: 8px; line-height: 9px; align-items: flex-end; padding-right: 2px; box-sizing: border-box; color: #444; }
.dec-a, .dec-b { position: absolute; left: 1px; }
.dec-a { top: 4px; }
.dec-b { top: 13px; }

.gallery {
  flex: none;
  box-sizing: border-box;
  width: 320px;
  height: 62px;
  margin: 3px 0 0 5px;
  padding: 5px 2px;
  background: #fff;
  border: 1px solid #c6c6c6;
  display: grid;
  grid-template-columns: repeat(3, 100px);
  column-gap: 6px;
  row-gap: 6px;
}
.st { height: 22px; line-height: 22px; padding-left: 5px; font-size: 14px; color: #222; }
.st-pink { background: #ff99cc; color: #800080; }
.st-lime { background: #ccffcc; color: #008000; }
.st-normal { box-shadow: 0 0 0 3px #c6c6c6; }
.st-bad { background: #ffc7ce; color: #9c0006; }
.st-good { background: #c6efce; color: #006100; }
.gallery-scroll {
  flex: none;
  width: 15px;
  height: 62px;
  margin-top: 3px;
  margin-left: -1px;
  box-sizing: border-box;
  border: 1px solid #c6c6c6;
  display: flex;
  flex-direction: column;
}
.gs { flex: 1; display: flex; flex-direction: column; gap: 2px; align-items: center; justify-content: center; background: #fff; border-bottom: 1px solid #c6c6c6; }
.gs:last-child { border-bottom: 0; }
.gs.top { background: #e2e2e2; }
.dash { width: 6px; height: 1px; background: #777; }
.collapse { position: absolute; right: 4px; bottom: 5px; }

/* formula bar */
.formula {
  height: 48px;
  box-sizing: border-box;
  padding-top: 10px;
  background: #e6e6e6;
  display: flex;
  align-items: flex-start;
}
.name-box {
  box-sizing: border-box;
  width: 123px;
  height: 28px;
  margin-left: 6px;
  padding: 0 6px 2px;
  background: #fff;
  border: 1px solid #c6c6c6;
  display: flex;
  align-items: center;
  justify-content: space-between;
  font-size: 13px;
  color: #555;
}
.big-caret { border-left-width: 4px; border-right-width: 4px; border-top-width: 4px; }
.dots { width: 32px; height: 28px; display: flex; flex-direction: column; align-items: center; justify-content: center; gap: 2px; }
.dots i { width: 3px; height: 3px; background: #b0b0b0; }
.fx-box {
  box-sizing: border-box;
  width: 109px;
  height: 28px;
  background: #fff;
  border: 1px solid #c6c6c6;
  display: flex;
  align-items: center;
  padding-left: 11px;
  gap: 22px;
}
.fx { font: italic 15px "Liberation Serif", serif; color: #555; margin-left: -1px; }
.input {
  flex: 1;
  box-sizing: border-box;
  height: 28px;
  margin-left: 4px;
  margin-right: 1px;
  background: #fff;
  border: 1px solid #c6c6c6;
  display: flex;
  align-items: center;
  justify-content: space-between;
  padding: 0 3px 2px 10px;
  font-size: 14px;
  color: #444;
}

/* sheet */
.sheet { height: 786px; display: flex; background: #e6e6e6; }
.grid {
  position: relative;
  width: 1731px;
  box-sizing: border-box;
  border-right: 1px solid #a0a0a0;
  overflow: hidden;
  flex: none;
}
.col-head {
  display: flex;
  height: 13px;
  box-sizing: border-box;
  border-bottom: 1px solid #9e9e9e;
  background: #e6e6e6;
  width: 2000px;
}
.corner { flex: none; width: 20px; position: relative; border-right: 1px solid #b0b0b0; box-sizing: border-box; }
.corner i {
  position: absolute;
  right: 3px;
  bottom: 1px;
  width: 0;
  height: 0;
  border-left: 6px solid transparent;
  border-bottom: 6px solid #b8b8b8;
}
.ch {
  flex: none;
  box-sizing: border-box;
  line-height: 12px;
  text-align: center;
  font-size: 10px;
  color: #444;
  border-right: 1px solid #b0b0b0;
}
.ch.on { background: #d2d2d2; border-bottom: 2px solid #217346; height: 13px; color: #217346; }
.rows-wrap { height: 773px; overflow: hidden; background: #fff; width: 2000px; }
.row { display: flex; height: 28px; }
.rh {
  flex: none;
  width: 20px;
  box-sizing: border-box;
  background: #e6e6e6;
  border-right: 1px solid #9e9e9e;
  border-bottom: 1px solid #cfcfcf;
  font-size: 9.500px;
  color: #444;
  text-align: center;
  line-height: 10px;
  padding-top: 16px;
}
.rh.on { background: #d2d2d2; color: #217346; border-right: 2px solid #217346; }
.cell {
  flex: none;
  box-sizing: border-box;
  height: 28px;
  border-right: 1px solid #d4d4d4;
  border-bottom: 1px solid #d4d4d4;
  font-size: 13px;
  color: #2a2a2a;
  text-align: center;
  line-height: 27px;
  white-space: nowrap;
  overflow: hidden;
}
.cell.bad { background: #ffc7ce; color: #9c0006; border-color: #ffc7ce; }
.cell.fill { background: #c4c4c4; }
.selection {
  position: absolute;
  left: 104px;
  top: 684px;
  width: 89px;
  height: 58px;
  box-sizing: border-box;
  border: 2px solid #217346;
}
.handle {
  position: absolute;
  left: 189px;
  top: 737px;
  width: 7px;
  height: 7px;
  box-sizing: border-box;
  background: #217346;
  border: 1px solid #fff;
}
.quick {
  position: absolute;
  left: 193px;
  top: 742px;
  width: 20px;
  height: 20px;
  box-sizing: border-box;
  background: #fff;
  border: 1px solid #b0b0b0;
  display: flex;
  align-items: center;
  justify-content: center;
}
.vscroll {
  flex: none;
  width: 12px;
  margin-left: 4px;
  padding-top: 2px;
  display: flex;
  flex-direction: column;
}
.sb-btn {
  height: 15px;
  box-sizing: border-box;
  background: #fff;
  border: 1px solid #b0b0b0;
  display: flex;
  align-items: center;
  justify-content: center;
}
.sb-thumb {
  height: 195px;
  box-sizing: border-box;
  margin-top: 2px;
  background: #fff;
  border: 1px solid #b0b0b0;
}
.sb-btn.end { margin-top: auto; height: 14px; }
.sb-btn.end .caret { border-top-color: #666; }

/* sheet tabs */
.sheet-tabs {
  height: 29px;
  box-sizing: border-box;
  background: #e6e6e6;
  border-top: 1px solid #a0a0a0;
  border-bottom: 1px solid #c6c6c6;
  margin-top: -1px;
  display: flex;
  align-items: flex-start;
  font-size: 13px;
  color: #444;
  position: relative;
}
.nav-arrows { width: 100px; flex: none; height: 24px; display: flex; align-items: center; padding-left: 26px; box-sizing: border-box; gap: 22px; }
.tri-l { width: 0; height: 0; border-top: 4px solid transparent; border-bottom: 4px solid transparent; border-right: 5px solid #c0c0c0; }
.tri-r { width: 0; height: 0; border-top: 4px solid transparent; border-bottom: 4px solid transparent; border-left: 5px solid #c0c0c0; }
.tri-l.dark { border-right-color: #666; }
.tri-r.dark { border-left-color: #666; }
.tab-sep { width: 1px; height: 21px; margin-top: 3px; background: #a0a0a0; flex: none; }
.stab {
  flex: none;
  box-sizing: border-box;
  height: 25px;
  display: flex;
  align-items: center;
  justify-content: center;
  position: relative;
  white-space: nowrap;
}
.stab::after {
  content: "";
  position: absolute;
  right: 0;
  top: 3px;
  width: 1px;
  height: 21px;
  background: #a0a0a0;
}
.stab.active {
  background: #fff;
  color: #217346;
  margin-top: -1px;
  height: 25px;
  border-left: 1px solid #a0a0a0;
  border-right: 1px solid #a0a0a0;
  border-bottom: 2px solid #217346;
}
.stab.active::after { display: none; }
.stab.blue span, .stab.orange span {
  height: 22px;
  margin-top: 2px;
  line-height: 22px;
  text-align: center;
  color: #222;
}
.stab.blue span { background: #bdd7ee; width: 111px; }
.stab.orange span { background: #f4b183; width: 58px; }
.add { position: absolute; left: 975px; top: 6px; }
.tab-dots { position: absolute; left: 1173px; top: 0; height: 26px; width: 32px; }
.tab-dots i { background: #c0c0c0; width: 2px; height: 2px; }
.hscroll {
  position: absolute;
  left: 1207px;
  top: 6px;
  width: 524px;
  height: 15px;
  display: flex;
}
.hb {
  flex: none;
  width: 15px;
  box-sizing: border-box;
  background: #fff;
  border: 1px solid #b0b0b0;
  display: flex;
  align-items: center;
  justify-content: center;
}
.hthumb { flex: none; width: 17px; background: #fff; box-sizing: border-box; border: 1px solid #b0b0b0; border-left: 0; }
.htrack { flex: 1; background: #d8d8d8; }

/* status bar */
.status {
  height: 21px;
  display: flex;
  align-items: center;
  background: #f1f1f1;
  color: #555;
  padding-left: 7px;
}
.numlock { margin-left: 19px; }
.macro { margin-left: 17px; }
.status-right { margin-left: auto; display: flex; align-items: center; height: 21px; }
.count { width: 57px; font-size: 12px; }
.view { width: 38px; height: 21px; display: flex; align-items: center; justify-content: center; }
.view.on { background: #c6c6c6; }
.pm { width: 15px; text-align: center; font-size: 15px; font-weight: 700; color: #555; }
.slider { position: relative; width: 100px; height: 1px; background: #a8a8a8; }
.tick { position: absolute; left: 51px; top: -3px; width: 1px; height: 7px; background: #a8a8a8; }
.knob { position: absolute; left: 34px; top: -7px; width: 4px; height: 14px; background: #555; }
.zoom { width: 59px; box-sizing: border-box; padding-left: 13px; font-size: 12px; }

/* overlay */
.overlay { position: absolute; left: -1px; top: 0; pointer-events: none; }
.arrow { fill: #f00000; filter: drop-shadow(2px 3px 3px rgba(0, 0, 0, .45)); }
.mark { opacity: .78; }
</style>

<style>
html, body { margin: 0; padding: 0; background: #f1f1f1; overflow: hidden; }
</style>
